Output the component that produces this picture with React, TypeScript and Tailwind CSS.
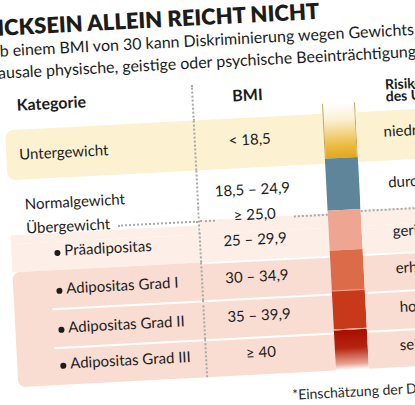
type Row = {
    label: string;
    bmi: string;
    risk: string;
    labelPt: string;
    bmiPt: string;
    riskPl: string;
    riskPt: string;
    h: string;
};

// Adipositas-Stufen, liegen im dunkleren Kasten
const obeseRows: Row[] = [
    { label: 'Adipositas Grad I', bmi: '30 – 34,9', risk: 'erhöht', labelPt: 'pt-[6px]', bmiPt: 'pt-[4px]', riskPl: 'pl-[32px]', riskPt: 'pt-[3px]', h: 'h-[38px]' },
    { label: 'Adipositas Grad II', bmi: '35 – 39,9', risk: 'hoch', labelPt: 'pt-[7px]', bmiPt: 'pt-[5px]', riskPl: 'pl-[34px]', riskPt: 'pt-[4px]', h: 'h-[39px]' },
    { label: 'Adipositas Grad III', bmi: '≥ 40', risk: 'sehr hoch', labelPt: 'pt-[4px]', bmiPt: 'pt-[3px]', riskPl: 'pl-[32px]', riskPt: 'pt-[3px]', h: 'h-[38px]' },
];

const Bullet = () => (
    <span className="inline-block w-[6px] h-[6px] rounded-full bg-[#1c1c1a] mr-[4px]" />
);

const Dotted = ({ className = '' }: { className?: string }) => (
    <div className={`border-t-2 border-dotted border-[#a8a8a8] ${className}`} />
);

export default function App() {
    return (
        <div className="w-[415px] h-[405px] overflow-hidden bg-white font-['Lato',sans-serif] text-[#1c1c1a]">
            <div className="w-[415px] h-[405px] rotate-[-3deg]">
                <div className="ml-[-10px] w-[480px]">
                    <h1 className="pt-[5px] text-[22px] leading-[24px] font-extrabold whitespace-nowrap">
                        DICKSEIN ALLEIN REICHT NICHT
                    </h1>
                    <p className="pl-[7px] text-[16px] leading-[22px] whitespace-nowrap">
                        Ab einem BMI von 30 kann Diskriminierung wegen Gewichts vorliegen, wenn
                    </p>
                    <p className="pl-[7px] text-[16px] leading-[22px] whitespace-nowrap">
                        kausale physische, geistige oder psychische Beeinträchtigungen bestehen
                    </p>

                    <div className="mt-[11px] ml-[19px] flex text-[15px] leading-[20px]">
                        {/* Kategorie + BMI */}
                        <div className="w-[318px] flex flex-col">
                            <div className="flex h-[36px] font-bold text-[16px] leading-[16px]">
                                <div className="w-[190px] pl-[13px] pt-[3px] border-r-2 border-dotted border-[#a8a8a8]">Kategorie</div>
                                <div className="w-[128px] pr-[20px] pt-[5px] text-center">BMI</div>
                            </div>

                            <div className="flex h-[50px] bg-[#fcf2d2] rounded-l-[8px]">
                                <div className="w-[190px] pl-[13px] pt-[14px] border-r-2 border-dotted border-[#a8a8a8]">Untergewicht</div>
                                <div className="w-[128px] pr-[20px] pt-[11px] text-center">&lt; 18,5</div>
                            </div>

                            <div className="flex h-[38px]">
                                <div className="w-[190px] pl-[16px] pt-[14px] border-r-2 border-dotted border-[#a8a8a8]">Normalgewicht</div>
                                <div className="w-[128px] pr-[20px] pt-[11px] text-center">18,5 – 24,9</div>
                            </div>

                            <div className="flex h-[26px]">
                                <div className="w-[190px] pl-[16px] flex border-r-2 border-dotted border-[#a8a8a8] bg-[linear-gradient(to_bottom,#ffffff_17px,#fdefe8_17px)]">
                                    <span>Übergewicht</span>
                                    <Dotted className="flex-1 mt-[12px] ml-[8px]" />
                                </div>
                                <div className="w-[128px] flex bg-[linear-gradient(to_bottom,#ffffff_12px,#fdefe8_12px)]">
                                    <Dotted className="w-[15px] mt-[12px]" />
                                    <span className="ml-[19px] mr-[18px] mt-[-2px]">≥ 25,0</span>
                                    <Dotted className="flex-1 mt-[12px]" />
                                </div>
                            </div>

                            <div className="flex h-[28px] bg-[#fdefe8]">
                                <div className="w-[190px] pl-[43px] mt-[-2px] border-r-2 border-dotted border-[#a8a8a8]">
                                    <Bullet />Präadipositas
                                </div>
                                <div className="w-[128px] pr-[20px] mt-[-3px] text-center">25 – 29,9</div>
                            </div>

                            <div className="flex flex-col bg-[#f9ddd2] rounded-l-[7px]">
                                {obeseRows.map((r, i) => (
                                    <div key={r.label} className={`flex ${r.h}`}>
                                        <div className="w-[190px] border-r-2 border-dotted border-[#a8a8a8]">
                                            <div className={`ml-[38px] pl-[5px] border-t-2 ${i === 0 ? 'border-transparent' : 'border-white'} ${r.labelPt}`}>
                                                <Bullet />{r.label}
                                            </div>
                                        </div>
                                        <div className={`w-[128px] pr-[20px] text-center border-t-2 border-white ${r.bmiPt}`}>{r.bmi}</div>
                                    </div>
                                ))}
                            </div>
                        </div>

                        {/* Farbskala */}
                        <div className="w-[42px] pt-[26px] flex flex-col">
                            <div className="h-[55px] border-x border-[#c9a552] bg-[linear-gradient(to_bottom,#ffffff_0%,#fbf0d4_30%,#eab93a_80%,#e2a71e_100%)]" />
                            <div className="h-[52px] bg-[#5e8599]" />
                            <div className="h-[40px] bg-[#eea693]" />
                            <div className="h-[40px] bg-[#dc6b4a]" />
                            <div className="h-[39px] bg-[#c8381a] border-t-[1.5px] border-[#f3a68b]" />
                            <div className="h-[41px] border-t-[1.5px] border-[#f3a68b] bg-[linear-gradient(to_bottom,#a80d02_0%,#b52410_45%,#e9a594_85%,#ffffff_100%)]" />
                        </div>

                        {/* Risiko */}
                        <div className="w-[110px] flex flex-col whitespace-nowrap">
                            <div className="h-[36px] pl-[31px] pt-[4px] font-bold text-[14px] leading-[12px]">
                                <div>Risiko für Folgeerkrankungen</div>
                                <div>des Übergewichts*</div>
                            </div>
                            <div className="h-[50px] bg-[#fcf2d2] pl-[27px] pt-[10px]">niedrig</div>
                            <div className="h-[38px] pl-[29px] pt-[11px]">durchschnittlich</div>
                            <div className="h-[26px] bg-[linear-gradient(to_bottom,#ffffff_10px,#fdefe8_10px)]">
                                <Dotted className="mt-[10px]" />
                            </div>
                            <div className="h-[28px] bg-[#fdefe8] pl-[31px]">
                                <div className="mt-[-4px]">gering erhöht</div>
                            </div>
                            <div className="flex flex-col bg-[#f9ddd2]">
                                {obeseRows.map((r) => (
                                    <div key={r.risk} className={`${r.h} ${r.riskPl} border-t-2 border-white ${r.riskPt}`}>{r.risk}</div>
                                ))}
                            </div>
                        </div>
                    </div>

                    <p className="mt-[12px] ml-[292px] text-[14px] leading-[20px] text-[#2a2a2a] whitespace-nowrap">
                        *Einschätzung der DGE
                    </p>
                </div>
            </div>
        </div>
    );
}
